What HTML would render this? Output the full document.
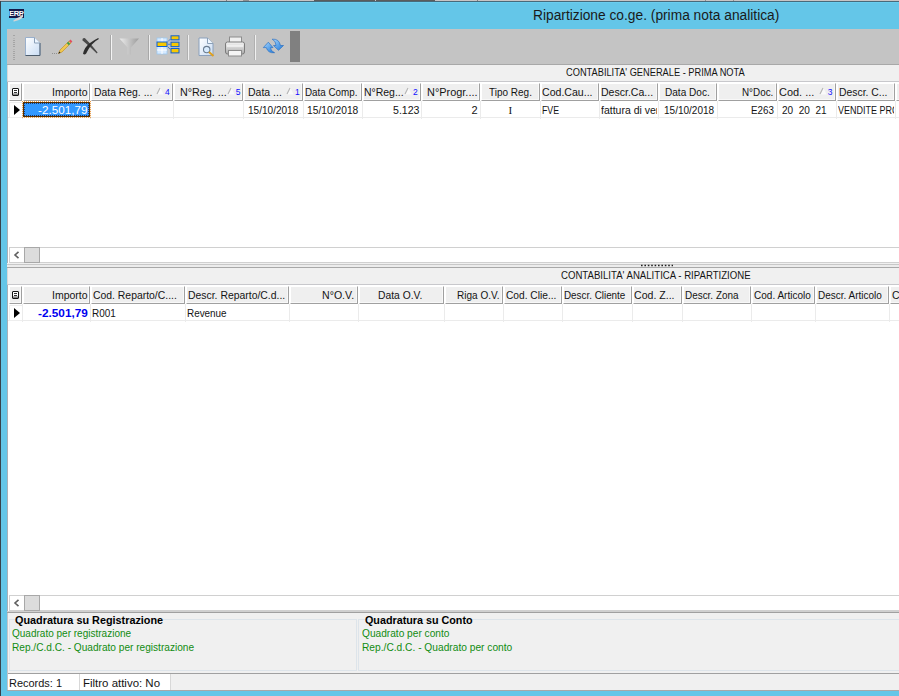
<!DOCTYPE html>
<html><head><meta charset="utf-8">
<style>
*{margin:0;padding:0;box-sizing:border-box}
html,body{width:899px;height:696px;overflow:hidden}
body{position:relative;background:#64c6e8;font-family:"Liberation Sans",sans-serif;font-size:11px;color:#141414}
div,svg.s{position:absolute}
.t{white-space:pre}
.hc{height:18px;background:#efefef;border-left:1px solid #fff;border-top:1px solid #fff;border-right:1px solid #a0a0a0;border-bottom:1px solid #a0a0a0;box-shadow:inset -1px -1px 0 #f8f8f8}
.dv{width:1px;background:#ebebeb}
.dh{height:1px;background:#ebebeb}
</style></head><body>
<div style="left:0;top:0;width:899px;height:1px;background:#c8c4c4"></div>
<div style="left:243px;top:0;width:6px;height:1px;background:#909090"></div>
<div style="left:314px;top:0;width:61px;height:1px;background:#5c5c5c"></div>
<div style="left:376px;top:0;width:59px;height:1px;background:#5c5c5c"></div>
<div style="left:226px;top:0;width:1px;height:1px;background:#808080"></div>
<div style="left:477px;top:0;width:1px;height:1px;background:#808080"></div>
<div style="left:705px;top:0;width:1px;height:1px;background:#909090"></div>
<div style="left:733px;top:0;width:1px;height:1px;background:#909090"></div>
<div style="left:0;top:1px;width:899px;height:1px;background:#486a7a"></div>
<div style="left:0;top:1px;width:1px;height:695px;background:#343a42"></div>
<div style="left:1px;top:2px;width:898px;height:1px;background:#6acef0"></div>
<!-- toolbar -->
<div style="left:7px;top:29px;width:892px;height:35px;background:#c4c4c4"></div>
<div style="left:7px;top:64px;width:892px;height:1px;background:#a8a8a8"></div>
<div style="left:290px;top:31px;width:10px;height:31px;background:#808080"></div>
<!-- panel -->
<div style="left:7px;top:65px;width:892px;height:626px;background:#f0f0f0"></div>
<div style="left:7px;top:65px;width:1px;height:16px;background:#d8d8d8"></div>

<div style="left:7px;top:81px;width:892px;height:1px;background:#c8c8cc"></div>
<div style="left:7px;top:82px;width:892px;height:181px;background:#fff"></div>
<div class="hc" style="left:9px;top:83px;width:13px"></div>
<div class="dv" style="left:22px;top:101px;height:18px"></div>
<div class="hc" style="left:23px;top:83px;width:67px"></div>
<div class="dv" style="left:90px;top:101px;height:18px"></div>
<div class="hc" style="left:91px;top:83px;width:82px"></div>
<div class="dv" style="left:173px;top:101px;height:18px"></div>
<div class="hc" style="left:174px;top:83px;width:69px"></div>
<div class="dv" style="left:243px;top:101px;height:18px"></div>
<div class="hc" style="left:244px;top:83px;width:59px"></div>
<div class="dv" style="left:303px;top:101px;height:18px"></div>
<div class="hc" style="left:304px;top:83px;width:58px"></div>
<div class="dv" style="left:362px;top:101px;height:18px"></div>
<div class="hc" style="left:363px;top:83px;width:58px"></div>
<div class="dv" style="left:421px;top:101px;height:18px"></div>
<div class="hc" style="left:422px;top:83px;width:58px"></div>
<div class="dv" style="left:480px;top:101px;height:18px"></div>
<div class="hc" style="left:481px;top:83px;width:59px"></div>
<div class="dv" style="left:540px;top:101px;height:18px"></div>
<div class="hc" style="left:541px;top:83px;width:58px"></div>
<div class="dv" style="left:599px;top:101px;height:18px"></div>
<div class="hc" style="left:600px;top:83px;width:58px"></div>
<div class="dv" style="left:658px;top:101px;height:18px"></div>
<div class="hc" style="left:659px;top:83px;width:58px"></div>
<div class="dv" style="left:717px;top:101px;height:18px"></div>
<div class="hc" style="left:718px;top:83px;width:59px"></div>
<div class="dv" style="left:777px;top:101px;height:18px"></div>
<div class="hc" style="left:778px;top:83px;width:58px"></div>
<div class="dv" style="left:836px;top:101px;height:18px"></div>
<div class="hc" style="left:837px;top:83px;width:58px"></div>
<div class="dv" style="left:895px;top:101px;height:18px"></div>
<div class="hc" style="left:896px;top:83px;width:95px"></div>
<div class="dv" style="left:991px;top:101px;height:18px"></div>
<div class="dh" style="left:8px;top:117px;width:891px"></div>
<!-- selected cell -->
<div style="left:22px;top:101px;width:69px;height:17px;border:1px dotted #f0a048"></div>
<div style="left:23px;top:102px;width:67px;height:15px;background:#3399ff;border:1px solid #5a3000"></div>
<div style="left:24px;top:103px;width:65px;height:13px;border:1px dotted #1a3a70"></div>
<div style="left:9px;top:102px;width:13px;height:16px;border:1px solid #eeeeee;border-right:none"></div>
<svg class="s" style="left:14px;top:105px" width="7" height="10"><path d="M0 0 L6 5 L0 10Z" fill="#000"/></svg>
<div style="left:9px;top:247px;width:890px;height:16px;background:#fff;border:1px solid #d0d0d0;border-right:none"></div>
<div style="left:24px;top:247px;width:16px;height:16px;background:#dcdcdc;border:1px solid #a8a8a8"></div>
<svg class="s" style="left:13px;top:251px" width="8" height="8"><path d="M5.5 0.8 L2 4 L5.5 7.2" fill="none" stroke="#606060" stroke-width="1.6"/></svg>
<div style="left:7px;top:264px;width:892px;height:1px;background:#c8c8c8"></div>
<div style="left:7px;top:265px;width:892px;height:2px;background:#ececec"></div>
<div style="left:7px;top:267px;width:892px;height:1px;background:#a8a8a8"></div>
<svg class="s" style="left:640px;top:264px" width="34" height="3"><path d="M1 1.5 H33" stroke="#202020" stroke-width="1.6" stroke-dasharray="1.6 1.8"/></svg>
<div style="left:7px;top:268px;width:1px;height:16px;background:#d8d8d8"></div>
<div style="left:7px;top:284px;width:892px;height:1px;background:#c8c8cc"></div>
<div style="left:7px;top:285px;width:892px;height:326px;background:#fff"></div>
<div class="hc" style="left:9px;top:286px;width:13px"></div>
<div class="dv" style="left:22px;top:304px;height:18px"></div>
<div class="hc" style="left:23px;top:286px;width:67px"></div>
<div class="dv" style="left:90px;top:304px;height:18px"></div>
<div class="hc" style="left:91px;top:286px;width:94px"></div>
<div class="dv" style="left:185px;top:304px;height:18px"></div>
<div class="hc" style="left:186px;top:286px;width:103px"></div>
<div class="dv" style="left:289px;top:304px;height:18px"></div>
<div class="hc" style="left:290px;top:286px;width:68px"></div>
<div class="dv" style="left:358px;top:304px;height:18px"></div>
<div class="hc" style="left:359px;top:286px;width:85px"></div>
<div class="dv" style="left:444px;top:304px;height:18px"></div>
<div class="hc" style="left:445px;top:286px;width:58px"></div>
<div class="dv" style="left:503px;top:304px;height:18px"></div>
<div class="hc" style="left:504px;top:286px;width:58px"></div>
<div class="dv" style="left:562px;top:304px;height:18px"></div>
<div class="hc" style="left:563px;top:286px;width:69px"></div>
<div class="dv" style="left:632px;top:304px;height:18px"></div>
<div class="hc" style="left:633px;top:286px;width:49px"></div>
<div class="dv" style="left:682px;top:304px;height:18px"></div>
<div class="hc" style="left:683px;top:286px;width:68px"></div>
<div class="dv" style="left:751px;top:304px;height:18px"></div>
<div class="hc" style="left:752px;top:286px;width:63px"></div>
<div class="dv" style="left:815px;top:304px;height:18px"></div>
<div class="hc" style="left:816px;top:286px;width:73px"></div>
<div class="dv" style="left:889px;top:304px;height:18px"></div>
<div class="hc" style="left:890px;top:286px;width:101px"></div>
<div class="dv" style="left:991px;top:304px;height:18px"></div>
<div class="dh" style="left:8px;top:320px;width:891px"></div>
<div style="left:9px;top:305px;width:13px;height:16px;border:1px solid #eeeeee;border-right:none"></div>
<svg class="s" style="left:14px;top:308px" width="7" height="10"><path d="M0 0 L6 5 L0 10Z" fill="#000"/></svg>
<div style="left:9px;top:595px;width:890px;height:16px;background:#fff;border:1px solid #d0d0d0;border-right:none"></div>
<div style="left:24px;top:595px;width:16px;height:16px;background:#dcdcdc;border:1px solid #a8a8a8"></div>
<svg class="s" style="left:13px;top:599px" width="8" height="8"><path d="M5.5 0.8 L2 4 L5.5 7.2" fill="none" stroke="#606060" stroke-width="1.6"/></svg>
<div style="left:7px;top:611px;width:892px;height:1px;background:#d0d0d0"></div>
<div style="left:7px;top:612px;width:892px;height:1px;background:#a0a0a0"></div>
<!-- group boxes -->
<div style="left:9px;top:619px;width:348px;height:52px;border:1px solid #dde4ea;border-right-color:#dde4ea"></div>
<div style="left:358px;top:619px;width:541px;height:52px;border:1px solid #dde4ea;border-right:none"></div>
<!-- status -->
<div style="left:7px;top:673px;width:892px;height:1px;background:#a0a0a0"></div>
<div style="left:8px;top:674px;width:163px;height:16px;background:#fff"></div>
<div style="left:79px;top:674px;width:1px;height:16px;background:#d8d8d8"></div>
<div style="left:170px;top:674px;width:1px;height:16px;background:#d8d8d8"></div>
<div style="left:7px;top:690px;width:892px;height:1px;background:#a8a8a8"></div>
<div style="left:0;top:691px;width:899px;height:5px;background:#64c6e8"></div>
<div style="left:0;top:1px;width:1px;height:695px;background:#37414a"></div>
<div style="left:7px;top:82px;width:1px;height:181px;background:#a8b0b8"></div>
<div style="left:7px;top:285px;width:1px;height:326px;background:#a8b0b8"></div>
<div style="left:7px;top:613px;width:1px;height:77px;background:#c0c4c8"></div>

<svg class="s" style="left:0;top:0" width="310" height="64">
 <defs>
  <linearGradient id="docg" x1="0" y1="0" x2="1" y2="1"><stop offset="0" stop-color="#ffffff"/><stop offset="1" stop-color="#c8dcf4"/></linearGradient>
  <linearGradient id="xg" x1="0" y1="0" x2="1" y2="1"><stop offset="0" stop-color="#707070"/><stop offset="1" stop-color="#202020"/></linearGradient>
  <linearGradient id="fg" x1="0" y1="0" x2="1" y2="0"><stop offset="0" stop-color="#ececec"/><stop offset="1" stop-color="#9c9c9c"/></linearGradient>
  <linearGradient id="pg" x1="0" y1="0" x2="0" y2="1"><stop offset="0" stop-color="#f4f4f4"/><stop offset="0.5" stop-color="#d0d0d0"/><stop offset="1" stop-color="#a8a8a8"/></linearGradient>
  <linearGradient id="bg" x1="0" y1="0" x2="1" y2="1"><stop offset="0" stop-color="#a8d8ff"/><stop offset="1" stop-color="#1e78d8"/></linearGradient>
 </defs>
 <!-- ERP icon -->
 <path d="M13 21 Q17 17 22.5 14.5 L22 18 Q19 21 14 21.5Z" fill="#d4d4d4"/>
 <rect x="9" y="9" width="15" height="9" fill="#141a4a"/>
 <text x="16.3" y="15.9" font-family="Liberation Sans" font-weight="bold" font-size="7.6" fill="#fff" text-anchor="middle" letter-spacing="-0.4">ERP</text>
 <path d="M17 18 Q20 17 23 14 L23 17 Q20 20 17 19Z" fill="#d8d8d8"/>
 <!-- gripper -->
 <g fill="#a4a4a4">
  <rect x="13" y="35" width="2" height="1"/><rect x="13" y="38" width="2" height="1" opacity=".5"/><rect x="13" y="40" width="2" height="1"/><rect x="13" y="42" width="2" height="1"/>
  <rect x="13" y="44" width="2" height="1"/><rect x="13" y="46" width="2" height="1"/><rect x="13" y="49" width="2" height="1" opacity=".5"/><rect x="13" y="51" width="2" height="1"/>
  <rect x="13" y="53" width="2" height="1"/><rect x="13" y="55" width="2" height="1"/><rect x="13" y="57" width="2" height="1"/><rect x="13" y="59" width="2" height="1"/>
 </g>
 <!-- new doc -->
 <path d="M25.5 37.5 H34.5 L40 43 V55.5 H25.5Z" fill="url(#docg)" stroke="#9ab0cc" stroke-width="1"/>
 <path d="M40 43 V55.5 H25.5" fill="none" stroke="#4c5c6c" stroke-width="1"/>
 <path d="M34.5 37.5 V43 H40" fill="#eef6ff" stroke="#8aa0b8" stroke-width="1"/>
 <!-- pencil -->
 <path d="M52 53.5 H57" stroke="#909090" stroke-width="1" stroke-dasharray="1 1"/>
 <path d="M58.5 53.5 L60 50 L69 41 L71 43 L62 52Z" fill="#f0c850" stroke="#c08a20" stroke-width="0.6"/>
 <path d="M58.3 53.7 L59.3 51.5 L60.5 52.7Z" fill="#202020"/>
 <path d="M67.5 42.5 L69.5 44.5" stroke="#3a9a50" stroke-width="1.8"/>
 <path d="M69 41 L70.5 39.6 L72.4 41.5 L71 43Z" fill="#e05060"/>
 <!-- X -->
 <path d="M82.3 40.2 Q82.5 37.6 85 38.2 Q91 44 97.6 52.4 L96.8 53.4 Q89.5 46 82.3 40.2Z" fill="#4a4a4a"/>
 <path d="M98.2 38 L98.9 38.9 Q91 42.8 86.2 53.6 Q84.5 55.5 83 53.8 Q84.5 47 90 43 Q94 40 98.2 38Z" fill="#2e2e2e"/>
 <!-- separators -->
 <rect x="110" y="35" width="1" height="25" fill="#a8a8a8"/><rect x="111" y="35" width="1" height="25" fill="#f4f4f4"/>
 <rect x="148" y="35" width="1" height="25" fill="#a8a8a8"/><rect x="149" y="35" width="1" height="25" fill="#f0f0f0"/>
 <rect x="187" y="35" width="1" height="25" fill="#b0b0b0"/><rect x="188" y="35" width="1" height="25" fill="#f0f0f0"/>
 <rect x="254" y="35" width="1" height="25" fill="#b0b0b0"/><rect x="255" y="35" width="1" height="25" fill="#f0f0f0"/>
 <!-- funnel -->
 <path d="M119.5 38.5 H139 L131 47.5 V54.5 H127.5 V47.5Z" fill="url(#fg)"/>
 <!-- grid icon -->
 <rect x="157" y="38" width="10" height="16" fill="#d6eaff" stroke="#9cc8f0" stroke-width="0.8"/>
 <path d="M162 38 V54 M157 50 H167" stroke="#ffffff" stroke-width="1"/>
 <rect x="157" y="42" width="10" height="4.5" fill="#f8c800" stroke="#1060d0" stroke-width="1"/>
 <rect x="171" y="35.8" width="8" height="4" fill="#f8c800" stroke="#1060d0" stroke-width="1"/>
 <rect x="171" y="42.2" width="8" height="4.4" fill="#f8c800" stroke="#1060d0" stroke-width="1"/>
 <rect x="171" y="48.5" width="8" height="4.4" fill="#f8c800" stroke="#1060d0" stroke-width="1"/>
 <path d="M168 41.5 L170.5 39 M168 44.3 H170.5 M168 47 L170.5 49.5" stroke="#3a7ad0" stroke-width="0.9"/>
 <!-- preview -->
 <path d="M199 38 H207.5 L213 43.5 V55.5 H199Z" fill="url(#docg)" stroke="#8aa0bc" stroke-width="1"/>
 <path d="M207.5 38 V43.5 H213" fill="#eef6ff" stroke="#8aa0b8" stroke-width="1"/>
 <circle cx="206.7" cy="49.6" r="3.2" fill="#d8ecff" stroke="#6a7c90" stroke-width="1.1"/>
 <path d="M209 52 L213.5 56" stroke="#e0a020" stroke-width="2"/>
 <!-- printer -->
 <rect x="229.5" y="37" width="12" height="5.5" fill="#f0f0f0" stroke="#8c8c8c" stroke-width="1"/>
 <rect x="225.5" y="42" width="19" height="12" rx="2" fill="url(#pg)" stroke="#7c7c7c" stroke-width="1"/>
 <rect x="228.5" y="50.5" width="13" height="5.5" fill="#f4f4f4" stroke="#8c8c8c" stroke-width="1"/>
 <path d="M227 46 H243" stroke="#ffffff" stroke-width="1"/>
 <!-- refresh -->
 <path d="M268.3 42.2 L273 47.6 H270.5 Q270.5 51 274.6 52.7 Q268 53.5 266.3 47.6 H263.3Z" fill="url(#bg)" stroke="#1a64c0" stroke-width="0.6"/>
 <path d="M278.5 50.3 L273.5 45.5 H276 Q276 41 272.2 39.2 Q279 38.5 280.5 45.5 H283.5Z" fill="url(#bg)" stroke="#1a64c0" stroke-width="0.6"/>
</svg>
<!-- indicator header icons -->
<div style="left:12px;top:88px;width:7px;height:8px;background:#fff;border:1px solid #141414;border-radius:1px"></div><div style="left:14px;top:90px;width:3px;height:1px;background:#303030"></div><div style="left:14px;top:92px;width:3px;height:1px;background:#303030"></div><div style="left:13px;top:93px;width:5px;height:2px;background:linear-gradient(#d0d0d0,#707070)"></div>
<div style="left:12px;top:291px;width:7px;height:8px;background:#fff;border:1px solid #141414;border-radius:1px"></div><div style="left:14px;top:293px;width:3px;height:1px;background:#303030"></div><div style="left:14px;top:295px;width:3px;height:1px;background:#303030"></div><div style="left:13px;top:296px;width:5px;height:2px;background:linear-gradient(#d0d0d0,#707070)"></div>
<div class="t" style="left:164.90px;top:87.05px;font-size:8.5px;line-height:10px;color:#1010ff;font-weight:normal">4</div>
<svg class="s" style="left:156px;top:87px" width="8" height="8"><path d="M1 7.5 L7.5 7.5 L4.5 1Z" fill="#fafafa"/><path d="M1 7 L4 1" stroke="#b4b4b4" stroke-width="1.1"/></svg>
<div class="t" style="left:235.70px;top:87.05px;font-size:8.5px;line-height:10px;color:#1010ff;font-weight:normal">5</div>
<svg class="s" style="left:226.8px;top:87px" width="8" height="8"><path d="M1 7.5 L7.5 7.5 L4.5 1Z" fill="#fafafa"/><path d="M1 7 L4 1" stroke="#b4b4b4" stroke-width="1.1"/></svg>
<div class="t" style="left:295.10px;top:87.05px;font-size:8.5px;line-height:10px;color:#1010ff;font-weight:normal">1</div>
<svg class="s" style="left:286.2px;top:87px" width="8" height="8"><path d="M1 7.5 L7.5 7.5 L4.5 1Z" fill="#fafafa"/><path d="M1 7 L4 1" stroke="#b4b4b4" stroke-width="1.1"/></svg>
<div class="t" style="left:412.90px;top:87.05px;font-size:8.5px;line-height:10px;color:#1010ff;font-weight:normal">2</div>
<svg class="s" style="left:404px;top:87px" width="8" height="8"><path d="M1 7.5 L7.5 7.5 L4.5 1Z" fill="#fafafa"/><path d="M1 7 L4 1" stroke="#b4b4b4" stroke-width="1.1"/></svg>
<div class="t" style="left:827.70px;top:87.05px;font-size:8.5px;line-height:10px;color:#1010ff;font-weight:normal">3</div>
<svg class="s" style="left:818.8px;top:87px" width="8" height="8"><path d="M1 7.5 L7.5 7.5 L4.5 1Z" fill="#fafafa"/><path d="M1 7 L4 1" stroke="#b4b4b4" stroke-width="1.1"/></svg>
<div class="t" style="left:533.40px;top:5.15px;font-size:14px;line-height:20px;transform:scaleX(0.9830);transform-origin:0 0;font-weight:normal;color:#1a1a1a;">Ripartizione co.ge. (prima nota analitica)</div>
<div class="t" style="left:566.10px;top:62.53px;font-size:10px;line-height:20px;transform:scaleX(0.9256);transform-origin:0 0;font-weight:normal;color:#141414;">CONTABILITA' GENERALE - PRIMA NOTA</div>
<div class="t" style="left:560.90px;top:265.54px;font-size:10px;line-height:20px;transform:scaleX(0.9606);transform-origin:0 0;font-weight:normal;color:#141414;">CONTABILITA' ANALITICA - RIPARTIZIONE</div>
<div class="t" style="left:51.80px;top:82.19px;font-size:11px;line-height:20px;transform:scaleX(0.9546);transform-origin:0 0;font-weight:normal;color:#141414;">Importo</div>
<div class="t" style="left:94.40px;top:82.19px;font-size:11px;line-height:20px;transform:scaleX(0.9441);transform-origin:0 0;font-weight:normal;color:#141414;">Data Reg. ...</div>
<div class="t" style="left:179.70px;top:82.19px;font-size:11px;line-height:20px;transform:scaleX(0.9790);transform-origin:0 0;font-weight:normal;color:#141414;">N°Reg. ...</div>
<div class="t" style="left:247.70px;top:82.19px;font-size:11px;line-height:20px;transform:scaleX(0.9532);transform-origin:0 0;font-weight:normal;color:#141414;">Data ...</div>
<div class="t" style="left:305.20px;top:82.19px;font-size:11px;line-height:20px;transform:scaleX(0.8945);transform-origin:0 0;font-weight:normal;color:#141414;">Data Comp.</div>
<div class="t" style="left:364.40px;top:82.19px;font-size:11px;line-height:20px;transform:scaleX(0.9499);transform-origin:0 0;font-weight:normal;color:#141414;">N°Reg...</div>
<div class="t" style="left:426.90px;top:82.19px;font-size:11px;line-height:20px;transform:scaleX(0.9929);transform-origin:0 0;font-weight:normal;color:#141414;">N°Progr....</div>
<div class="t" style="left:488.60px;top:82.19px;font-size:11px;line-height:20px;transform:scaleX(0.9073);transform-origin:0 0;font-weight:normal;color:#141414;">Tipo Reg.</div>
<div class="t" style="left:541.90px;top:82.19px;font-size:11px;line-height:20px;transform:scaleX(0.9604);transform-origin:0 0;font-weight:normal;color:#141414;">Cod.Cau...</div>
<div class="t" style="left:601.10px;top:82.19px;font-size:11px;line-height:20px;transform:scaleX(0.9577);transform-origin:0 0;font-weight:normal;color:#141414;">Descr.Ca...</div>
<div class="t" style="left:665.20px;top:82.19px;font-size:11px;line-height:20px;transform:scaleX(0.9139);transform-origin:0 0;font-weight:normal;color:#141414;">Data Doc.</div>
<div class="t" style="left:741.90px;top:82.19px;font-size:11px;line-height:20px;transform:scaleX(0.8953);transform-origin:0 0;font-weight:normal;color:#141414;">N°Doc.</div>
<div class="t" style="left:779.40px;top:82.19px;font-size:11px;line-height:20px;transform:scaleX(0.9955);transform-origin:0 0;font-weight:normal;color:#141414;">Cod. ...</div>
<div class="t" style="left:839.00px;top:82.19px;font-size:11px;line-height:20px;transform:scaleX(0.9427);transform-origin:0 0;font-weight:normal;color:#141414;">Descr. C...</div>
<div class="t" style="left:248.10px;top:100.19px;font-size:11px;line-height:20px;transform:scaleX(0.9137);transform-origin:0 0;font-weight:normal;color:#141414;">15/10/2018</div>
<div class="t" style="left:306.90px;top:100.19px;font-size:11px;line-height:20px;transform:scaleX(0.9318);transform-origin:0 0;font-weight:normal;color:#141414;">15/10/2018</div>
<div class="t" style="left:392.50px;top:100.19px;font-size:11px;line-height:20px;transform:scaleX(0.9627);transform-origin:0 0;font-weight:normal;color:#141414;">5.123</div>
<div class="t" style="left:471.60px;top:100.19px;font-size:11px;line-height:20px;letter-spacing:0.000px;font-weight:normal;color:#141414;">2</div>
<div class="t" style="left:541.90px;top:100.19px;font-size:11px;line-height:20px;transform:scaleX(0.7993);transform-origin:0 0;font-weight:normal;color:#141414;">FVE</div>
<div class="t" style="left:663.60px;top:100.19px;font-size:11px;line-height:20px;transform:scaleX(0.9100);transform-origin:0 0;font-weight:normal;color:#141414;">15/10/2018</div>
<div class="t" style="left:751.10px;top:100.19px;font-size:11px;line-height:20px;transform:scaleX(0.8914);transform-origin:0 0;font-weight:normal;color:#141414;">E263</div>
<div class="t" style="left:781.80px;top:100.19px;font-size:11px;line-height:20px;transform:scaleX(0.9115);transform-origin:0 0;font-weight:normal;color:#141414;">20  20  21</div>
<div class="t" style="left:508.40px;top:100.19px;font-size:11px;line-height:20px;letter-spacing:0.000px;font-weight:normal;color:#141414;font-family:'Liberation Serif';">I</div>
<div class="t" style="left:38.40px;top:100.19px;font-size:11px;line-height:20px;transform:scaleX(1.0649);transform-origin:0 0;font-weight:normal;color:#ffffff;">-2.501,79</div>
<div class="t" style="left:51.80px;top:285.19px;font-size:11px;line-height:20px;transform:scaleX(0.9546);transform-origin:0 0;font-weight:normal;color:#141414;">Importo</div>
<div class="t" style="left:92.90px;top:285.19px;font-size:11px;line-height:20px;transform:scaleX(0.9453);transform-origin:0 0;font-weight:normal;color:#141414;">Cod. Reparto/C....</div>
<div class="t" style="left:187.70px;top:285.19px;font-size:11px;line-height:20px;transform:scaleX(0.9464);transform-origin:0 0;font-weight:normal;color:#141414;">Descr. Reparto/C.d...</div>
<div class="t" style="left:321.90px;top:285.19px;font-size:11px;line-height:20px;transform:scaleX(0.9629);transform-origin:0 0;font-weight:normal;color:#141414;">N°O.V.</div>
<div class="t" style="left:377.70px;top:285.19px;font-size:11px;line-height:20px;transform:scaleX(0.9368);transform-origin:0 0;font-weight:normal;color:#141414;">Data O.V.</div>
<div class="t" style="left:457.40px;top:285.19px;font-size:11px;line-height:20px;transform:scaleX(0.9106);transform-origin:0 0;font-weight:normal;color:#141414;">Riga O.V.</div>
<div class="t" style="left:506.10px;top:285.19px;font-size:11px;line-height:20px;transform:scaleX(0.9263);transform-origin:0 0;font-weight:normal;color:#141414;">Cod. Clie...</div>
<div class="t" style="left:564.40px;top:285.19px;font-size:11px;line-height:20px;transform:scaleX(0.8953);transform-origin:0 0;font-weight:normal;color:#141414;">Descr. Cliente</div>
<div class="t" style="left:634.40px;top:285.19px;font-size:11px;line-height:20px;transform:scaleX(0.9602);transform-origin:0 0;font-weight:normal;color:#141414;">Cod. Z...</div>
<div class="t" style="left:684.70px;top:285.19px;font-size:11px;line-height:20px;transform:scaleX(0.9022);transform-origin:0 0;font-weight:normal;color:#141414;">Descr. Zona</div>
<div class="t" style="left:754.10px;top:285.19px;font-size:11px;line-height:20px;transform:scaleX(0.9115);transform-origin:0 0;font-weight:normal;color:#141414;">Cod. Articolo</div>
<div class="t" style="left:818.40px;top:285.19px;font-size:11px;line-height:20px;transform:scaleX(0.9068);transform-origin:0 0;font-weight:normal;color:#141414;">Descr. Articolo</div>
<div class="t" style="left:38.40px;top:303.19px;font-size:11px;line-height:20px;transform:scaleX(1.0735);transform-origin:0 0;font-weight:bold;color:#0000f0;">-2.501,79</div>
<div class="t" style="left:91.90px;top:303.19px;font-size:11px;line-height:20px;transform:scaleX(0.9051);transform-origin:0 0;font-weight:normal;color:#141414;">R001</div>
<div class="t" style="left:186.90px;top:303.19px;font-size:11px;line-height:20px;transform:scaleX(0.8993);transform-origin:0 0;font-weight:normal;color:#141414;">Revenue</div>
<div class="t" style="left:15.00px;top:610.19px;font-size:11px;line-height:20px;transform:scaleX(0.9849);transform-origin:0 0;font-weight:bold;color:#000;">Quadratura su Registrazione</div>
<div class="t" style="left:11.60px;top:623.36px;font-size:10.5px;line-height:20px;transform:scaleX(0.9535);transform-origin:0 0;font-weight:normal;color:#108c10;">Quadrato per registrazione</div>
<div class="t" style="left:11.60px;top:636.86px;font-size:10.5px;line-height:20px;transform:scaleX(0.9630);transform-origin:0 0;font-weight:normal;color:#108c10;">Rep./C.d.C. - Quadrato per registrazione</div>
<div class="t" style="left:365.00px;top:610.19px;font-size:11px;line-height:20px;transform:scaleX(0.9781);transform-origin:0 0;font-weight:bold;color:#000;">Quadratura su Conto</div>
<div class="t" style="left:362.30px;top:623.36px;font-size:10.5px;line-height:20px;transform:scaleX(0.9660);transform-origin:0 0;font-weight:normal;color:#108c10;">Quadrato per conto</div>
<div class="t" style="left:362.40px;top:636.86px;font-size:10.5px;line-height:20px;transform:scaleX(0.9718);transform-origin:0 0;font-weight:normal;color:#108c10;">Rep./C.d.C. - Quadrato per conto</div>
<div class="t" style="left:8.70px;top:673.02px;font-size:11.5px;line-height:20px;transform:scaleX(0.9531);transform-origin:0 0;font-weight:normal;color:#141414;">Records: 1</div>
<div class="t" style="left:83.40px;top:673.02px;font-size:11.5px;line-height:20px;transform:scaleX(0.9958);transform-origin:0 0;font-weight:normal;color:#141414;">Filtro attivo: No</div>
<div style="left:599px;top:100px;width:58px;height:18px;overflow:hidden"><div class="t" style="left:2.40px;top:0.19px;font-size:11px;line-height:20px;transform:scaleX(0.9532);transform-origin:0 0;font-weight:normal;color:#141414">fattura di ver</div></div>
<div style="left:836px;top:100px;width:58px;height:18px;overflow:hidden"><div class="t" style="left:2.00px;top:0.19px;font-size:11px;line-height:20px;transform:scaleX(0.8181);transform-origin:0 0;font-weight:normal;color:#141414">VENDITE PRC</div></div>
<div style="left:890px;top:285px;width:9px;height:18px;overflow:hidden"><div class="t" style="left:2.00px;top:0.36px;font-size:10.5px;line-height:20px;transform:scaleX(1.0000);transform-origin:0 0;font-weight:normal;color:#141414">C</div></div>
</body></html>
